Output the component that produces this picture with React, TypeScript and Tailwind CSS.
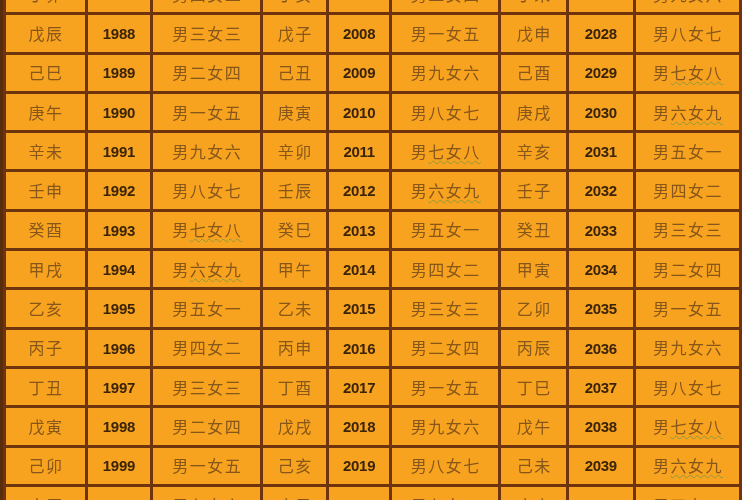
// 生肖年份 / 男女命卦 对照表

type Row = [string, string, string, string, string, string, string, string, string];

const rows: Row[] = [
  ['丁卯', '1987', '男四女二', '丁亥', '2007', '男二女四', '丁未', '2027', '男九女六'],
  ['戊辰', '1988', '男三女三', '戊子', '2008', '男一女五', '戊申', '2028', '男八女七'],
  ['己巳', '1989', '男二女四', '己丑', '2009', '男九女六', '己酉', '2029', '男七女八'],
  ['庚午', '1990', '男一女五', '庚寅', '2010', '男八女七', '庚戌', '2030', '男六女九'],
  ['辛未', '1991', '男九女六', '辛卯', '2011', '男七女八', '辛亥', '2031', '男五女一'],
  ['壬申', '1992', '男八女七', '壬辰', '2012', '男六女九', '壬子', '2032', '男四女二'],
  ['癸酉', '1993', '男七女八', '癸巳', '2013', '男五女一', '癸丑', '2033', '男三女三'],
  ['甲戌', '1994', '男六女九', '甲午', '2014', '男四女二', '甲寅', '2034', '男二女四'],
  ['乙亥', '1995', '男五女一', '乙未', '2015', '男三女三', '乙卯', '2035', '男一女五'],
  ['丙子', '1996', '男四女二', '丙申', '2016', '男二女四', '丙辰', '2036', '男九女六'],
  ['丁丑', '1997', '男三女三', '丁酉', '2017', '男一女五', '丁巳', '2037', '男八女七'],
  ['戊寅', '1998', '男二女四', '戊戌', '2018', '男九女六', '戊午', '2038', '男七女八'],
  ['己卯', '1999', '男一女五', '己亥', '2019', '男八女七', '己未', '2039', '男六女九'],
  ['庚辰', '2000', '男九女六', '庚子', '2020', '男七女八', '庚申', '2040', '男五女一'],
];

const widths = ['w-[82px]', 'w-[66px]', 'w-[110px]', 'w-[67px]', 'w-[63px]', 'w-[110px]', 'w-[68px]', 'w-[67px]', 'w-[107px]'];

// spell-check squiggles on the 七女八 / 六女九 cells
const squiggle = (t: string) => t === '男七女八' || t === '男六女九';

function Cell({ text, col }: { text: string; col: number }) {
  const isYear = col % 3 === 1;
  if (isYear) {
    return (
      <td className={`${widths[col]} border-[3px] border-[#6e340d] text-center p-0`}>
        <span className="font-['Liberation_Sans',sans-serif] font-bold text-[15px] tracking-[-0.3px] text-[#3a2307]">
          {text}
        </span>
      </td>
    );
  }
  const cjk = "font-['Noto_Sans_CJK_SC',sans-serif] text-[16px] tracking-[1.5px] pl-[1.5px] text-[#86561a]";
  return (
    <td className={`${widths[col]} border-[3px] border-[#6e340d] text-center p-0`}>
      {squiggle(text) && col !== 0 ? (
        <span className={cjk}>
          {text[0]}
          <span className="underline decoration-wavy decoration-[#8d9a3a] decoration-1 underline-offset-2">{text.slice(1)}</span>
        </span>
      ) : (
        <span className={cjk}>{text}</span>
      )}
    </td>
  );
}

export default function App() {
  return (
    <div className="w-[750px] h-[500px] overflow-hidden bg-white">
      <div className="w-[742px] -mt-[27px] border-l-[3px] border-[#5a2c0a] blur-[0.5px]">
        <table className="border-collapse table-fixed bg-[#f7a31f]">
          <tbody>
            {rows.map((r, i) => (
              <tr key={i} className="h-[39.3px]">
                {r.map((t, c) => (
                  <Cell key={c} text={t} col={c} />
                ))}
              </tr>
            ))}
          </tbody>
        </table>
      </div>
    </div>
  );
}
